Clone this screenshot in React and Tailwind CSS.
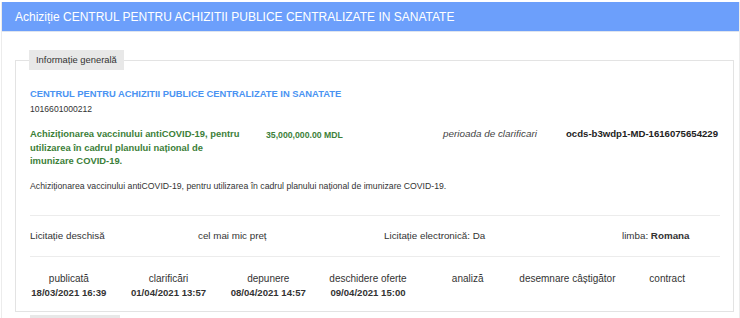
const dates = [
  { label: 'publicată', value: '18/03/2021 16:39' },
  { label: 'clarificări', value: '01/04/2021 13:57' },
  { label: 'depunere', value: '08/04/2021 14:57' },
  { label: 'deschidere oferte', value: '09/04/2021 15:00' },
  { label: 'analiză', value: '' },
  { label: 'desemnare câștigător', value: '' },
  { label: 'contract', value: '' },
];

export default function App() {
  return (
    <div className="w-[740px] h-[318px] overflow-hidden bg-white pt-[2px] font-['Liberation_Sans',Arial,sans-serif] text-[#333]">
      <div className="ml-[1px] h-[316px] border-x border-[#ececec]">
        <div className="h-[30px] bg-[#6c9ffb] border-b border-[#dfe5ee] pl-[13px] flex items-center text-white text-[12px]">
          Achiziție CENTRUL PENTRU ACHIZITII PUBLICE CENTRALIZATE IN SANATATE
        </div>

        <div className="pl-[13px] pt-[18px]">
          <fieldset className="w-[719px] border border-[#e3e3e3] pl-[14px] pr-[13px] pb-[11px]">
            <legend className="ml-[-1px] h-[20px] px-[7px] bg-[#e8e8e8] text-[9.4px] leading-[20px] text-[#333]">
              Informație generală
            </legend>

            <div className="mt-[18px] text-[9.4px] leading-[12px] font-bold text-[#4a93f2]">
              CENTRUL PENTRU ACHIZITII PUBLICE CENTRALIZATE IN SANATATE
            </div>
            <div className="mt-[2.5px] text-[8.6px] leading-[12px]">1016601000212</div>

            <div className="mt-[12.75px] flex items-start">
              <div className="w-[236px] pr-[20px] text-[9.4px] leading-[13.5px] font-bold text-[#3c8039]">
                Achiziționarea vaccinului antiCOVID-19, pentru utilizarea în cadrul planului național de imunizare COVID-19.
              </div>
              <div className="w-[177px] pt-[2px] text-[8.7px] leading-[13.5px] font-bold text-[#3c8039]">
                35,000,000.00 MDL
              </div>
              <div className="w-[123px] text-[9.9px] leading-[13.5px] italic text-[#444]">perioada de clarificari</div>
              <div className="text-[9.6px] leading-[13.5px] font-bold text-[#222]">ocds-b3wdp1-MD-1616075654229</div>
            </div>

            <div className="mt-[12.25px] text-[8.7px] leading-[12px]">
              Achiziționarea vaccinului antiCOVID-19, pentru utilizarea în cadrul planului național de imunizare COVID-19.
            </div>

            <div className="mt-[23px] border-t border-[#ececec] h-[41px] flex items-center text-[9.8px]">
              <div className="w-[168px]">Licitație deschisă</div>
              <div className="w-[186px]">cel mai mic preț</div>
              <div className="w-[238px]">Licitație electronică: Da</div>
              <div>
                limba: <span className="font-bold">Romana</span>
              </div>
            </div>

            <div className="border-t border-[#ececec] pt-[15px]">
              <div className="ml-[-11px] w-[698px] grid grid-cols-7 text-center">
                {dates.map((d) => (
                  <div key={d.label}>
                    <div className="text-[10px] leading-[14px]">{d.label}</div>
                    <div className="text-[9.6px] leading-[14px] font-bold h-[14px]">{d.value}</div>
                  </div>
                ))}
              </div>
            </div>
          </fieldset>
          <div className="mt-[3px] ml-[15px] w-[90px] h-[20px] bg-[#e8e8e8]"></div>
        </div>
      </div>
    </div>
  );
}
